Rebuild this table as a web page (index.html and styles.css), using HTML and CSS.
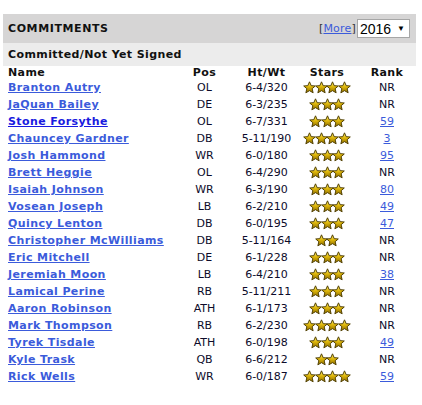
FILE: index.html
```html
<!DOCTYPE html>
<html>
<head>
<meta charset="utf-8">
<link rel="stylesheet" href="styles.css">
</head>
<body>
<svg width="0" height="0" class="defs">
  <defs>
    <linearGradient id="gold" x1="0" y1="0" x2="0" y2="1">
      <stop offset="0" stop-color="#fff27a"/>
      <stop offset="0.45" stop-color="#e0b80a"/>
      <stop offset="1" stop-color="#8c6c00"/>
    </linearGradient>
    <symbol id="star" viewBox="0 0 24 24">
      <path d="M12 1.5l3.1 7.1 7.6.6-5.8 5 1.8 7.6L12 17.8l-6.7 4 1.8-7.6-5.8-5 7.6-.6z" fill="url(#gold)" stroke="#4e3e00" stroke-width="1.8" stroke-linejoin="round"/>
    </symbol>
  </defs>
</svg>
<div class="box">
  <div class="head">
    <span class="title">COMMITMENTS</span>
    <div class="tools">
      <span class="more">[<a href="#">More</a>]</span>
      <div class="select"><span>2016</span><span class="arrow">▼</span></div>
    </div>
  </div>
  <div class="sub">Committed/Not Yet Signed</div>
  <div class="grid">
    <div class="row hdr"><span class="name">Name</span><span>Pos</span><span>Ht/Wt</span><span>Stars</span><span class="rank">Rank</span></div>
    <div class="row"><a class="name" href="#">Branton Autry</a><span>OL</span><span>6-4/320</span><span class="stars s4"></span><span class="rank">NR</span></div>
    <div class="row"><a class="name" href="#">JaQuan Bailey</a><span>DE</span><span>6-3/235</span><span class="stars s3"></span><span class="rank">NR</span></div>
    <div class="row"><a class="name visited" href="#">Stone Forsythe</a><span>OL</span><span>6-7/331</span><span class="stars s3"></span><span class="rank"><a href="#">59</a></span></div>
    <div class="row"><a class="name" href="#">Chauncey Gardner</a><span>DB</span><span>5-11/190</span><span class="stars s4"></span><span class="rank"><a href="#">3</a></span></div>
    <div class="row"><a class="name" href="#">Josh Hammond</a><span>WR</span><span>6-0/180</span><span class="stars s3"></span><span class="rank"><a href="#">95</a></span></div>
    <div class="row"><a class="name" href="#">Brett Heggie</a><span>OL</span><span>6-4/290</span><span class="stars s3"></span><span class="rank">NR</span></div>
    <div class="row"><a class="name" href="#">Isaiah Johnson</a><span>WR</span><span>6-3/190</span><span class="stars s3"></span><span class="rank"><a href="#">80</a></span></div>
    <div class="row"><a class="name" href="#">Vosean Joseph</a><span>LB</span><span>6-2/210</span><span class="stars s3"></span><span class="rank"><a href="#">49</a></span></div>
    <div class="row"><a class="name" href="#">Quincy Lenton</a><span>DB</span><span>6-0/195</span><span class="stars s3"></span><span class="rank"><a href="#">47</a></span></div>
    <div class="row"><a class="name" href="#">Christopher McWilliams</a><span>DB</span><span>5-11/164</span><span class="stars s2"></span><span class="rank">NR</span></div>
    <div class="row"><a class="name" href="#">Eric Mitchell</a><span>DE</span><span>6-1/228</span><span class="stars s3"></span><span class="rank">NR</span></div>
    <div class="row"><a class="name" href="#">Jeremiah Moon</a><span>LB</span><span>6-4/210</span><span class="stars s3"></span><span class="rank"><a href="#">38</a></span></div>
    <div class="row"><a class="name" href="#">Lamical Perine</a><span>RB</span><span>5-11/211</span><span class="stars s3"></span><span class="rank">NR</span></div>
    <div class="row"><a class="name" href="#">Aaron Robinson</a><span>ATH</span><span>6-1/173</span><span class="stars s3"></span><span class="rank">NR</span></div>
    <div class="row"><a class="name" href="#">Mark Thompson</a><span>RB</span><span>6-2/230</span><span class="stars s4"></span><span class="rank">NR</span></div>
    <div class="row"><a class="name" href="#">Tyrek Tisdale</a><span>ATH</span><span>6-0/198</span><span class="stars s3"></span><span class="rank"><a href="#">49</a></span></div>
    <div class="row"><a class="name" href="#">Kyle Trask</a><span>QB</span><span>6-6/212</span><span class="stars s2"></span><span class="rank">NR</span></div>
    <div class="row"><a class="name" href="#">Rick Wells</a><span>WR</span><span>6-0/187</span><span class="stars s4"></span><span class="rank"><a href="#">59</a></span></div>
  </div>
</div>
<script>
document.querySelectorAll('.stars').forEach(function (el) {
  var n = el.classList.contains('s4') ? 4 : el.classList.contains('s3') ? 3 : 2;
  var h = '';
  for (var i = 0; i < n; i++) h += '<svg class="star" viewBox="0 0 24 24"><use href="#star"/></svg>';
  el.innerHTML = h;
});
</script>
</body>
</html>
```
FILE: styles.css
```css
html, body { margin: 0; padding: 0; background: #fff; }
body { font-family: "DejaVu Sans", Verdana, sans-serif; font-size: 11px; color: #0d0b2a; }
.defs { position: absolute; width: 0; height: 0; }
.box { margin: 14px 0 0 3px; width: 413px; }
.head {
  background: #d6d5d5;
  height: 29px;
  display: flex;
  align-items: center;
  justify-content: space-between;
  padding: 0 6px 0 5px;
}
.title { font-weight: bold; font-size: 11px; color: #111; letter-spacing: 0.6px; }
.tools { display: flex; align-items: center; gap: 1px; }
.more { color: #333; font-size: 11px; letter-spacing: 0.2px; }
.more a { color: #3b5bdb; }
.select {
  width: 45px; height: 17px;
  background: #fff; border: 1px solid #a6a6a6;
  display: flex; align-items: center; justify-content: space-between;
  padding: 0 4px 0 2px; box-sizing: content-box;
  font-family: "Liberation Sans", Arial, sans-serif; font-size: 14px; color: #000;
}
.select .arrow { font-size: 8px; }
.sub {
  background: #ececec; height: 23px; line-height: 24px;
  padding-left: 5px; font-weight: bold; font-size: 11px; color: #111; letter-spacing: 0.4px;
}
.row {
  display: grid;
  grid-template-columns: 173px 57px 67px 54px 62px;
  height: 17px; line-height: 17px;
  text-align: center;
  white-space: nowrap;
}
.row.hdr { height: 13px; line-height: 13px; font-weight: bold; color: #111; letter-spacing: 0.4px; }
.row .name { text-align: left; padding-left: 5px; }
a.name { color: #3b5bdb; font-weight: bold; letter-spacing: 0.4px; }
a.name.visited { color: #1a1ae0; }
.rank { padding-left: 4px; }
.rank a { color: #3b5bdb; }
.stars { display: flex; justify-content: center; align-items: center; }
.star { width: 13px; height: 13px; margin: 0 -0.6px; }
```
